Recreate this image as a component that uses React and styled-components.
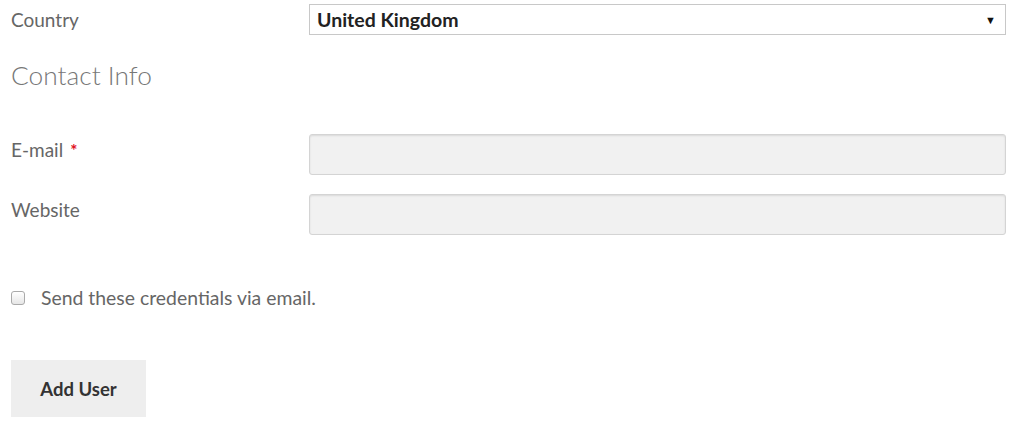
import React from 'react';
import styled, { createGlobalStyle } from 'styled-components';

const GlobalStyle = createGlobalStyle`
  body {
    margin: 0;
    background: #fff;
    font-family: 'Lato', 'Liberation Sans', sans-serif;
  }
`;

const Page = styled.div`
  width: 1006px;
  padding: 4px 0 0 11px;
  box-sizing: border-box;
`;

const FieldRow = styled.div`
  display: grid;
  grid-template-columns: 298px 1fr;
  align-items: start;
  margin-bottom: ${(p) => p.$gap || 0}px;
`;

const Label = styled.label`
  font-size: 19px;
  color: #666;
  line-height: 22px;
  padding-top: ${(p) => p.$top || 0}px;
`;

const Required = styled.span`
  color: #e0101c;
  margin-left: 7px;
  font-size: 17px;
  font-weight: 700;
`;

const SelectBox = styled.div`
  height: 31px;
  box-sizing: border-box;
  border: 1px solid #c8c8c8;
  background: #fff;
  display: flex;
  align-items: center;
  justify-content: space-between;
  padding: 0 8px 0 7px;
  font-size: 19.5px;
  font-weight: 700;
  color: #222;
`;

const Arrow = styled.span`
  font-size: 11px;
  color: #111;
  margin-right: 1px;
`;

const Heading = styled.h3`
  margin: 25px 0 44px;
  font-size: 26.3px;
  font-weight: 300;
  color: #777;
  line-height: 30px;
`;

const TextInput = styled.input`
  height: 41px;
  width: 100%;
  box-sizing: border-box;
  border: 1px solid #d4d4d4;
  border-radius: 3px;
  background: #f1f1f1;
  box-shadow: inset 0 1px 2px rgba(0, 0, 0, 0.1);
  outline: none;
  font-family: inherit;
`;

const CheckRow = styled.label`
  display: flex;
  align-items: center;
  margin-top: 52px;
  font-size: 19.4px;
  color: #666;
  line-height: 22px;
`;

const Box = styled.span`
  width: 12px;
  height: 12px;
  border: 1px solid #aaa;
  border-radius: 3px;
  background: linear-gradient(#fff, #e6e6e6);
  margin-right: 16px;
`;

const Button = styled.button`
  margin-top: 51px;
  width: 135px;
  height: 57px;
  border: none;
  background: #eee;
  font-family: inherit;
  font-size: 18.5px;
  font-weight: 700;
  color: #333;
`;

export default function App() {
  return (
    <>
      <GlobalStyle />
      <Page>
        <FieldRow>
          <Label $top={5}>Country</Label>
          <SelectBox>
            United Kingdom
            <Arrow>▼</Arrow>
          </SelectBox>
        </FieldRow>
        <Heading>Contact Info</Heading>
        <FieldRow $gap={19}>
          <Label $top={5}>
            E-mail<Required>*</Required>
          </Label>
          <TextInput />
        </FieldRow>
        <FieldRow>
          <Label $top={5}>Website</Label>
          <TextInput />
        </FieldRow>
        <CheckRow>
          <Box />
          Send these credentials via email.
        </CheckRow>
        <Button>Add User</Button>
      </Page>
    </>
  );
}
